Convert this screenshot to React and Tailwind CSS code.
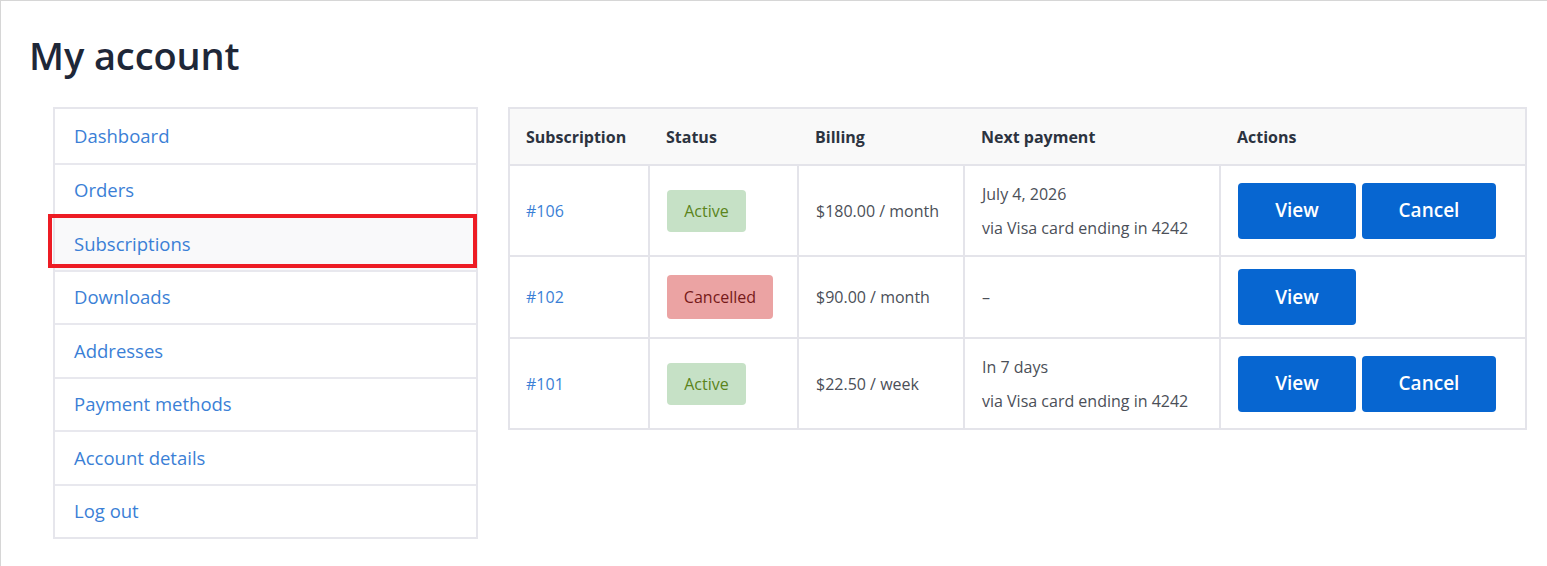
import React from "react";

const navItems = [
  "Dashboard",
  "Orders",
  "Subscriptions",
  "Downloads",
  "Addresses",
  "Payment methods",
  "Account details",
  "Log out",
];

function Badge({ status }) {
  if (status === "Active") {
    return (
      <span className="inline-flex items-center justify-center h-[42px] w-[79px] rounded-[4px] bg-[#c6e1c6] text-[#5b841b] text-[16px]">
        Active
      </span>
    );
  }
  return (
    <span className="inline-flex items-center justify-center h-[44px] w-[106px] rounded-[4px] bg-[#eba3a3] text-[#761919] text-[16px]">
      Cancelled
    </span>
  );
}

function Btn({ children, w }) {
  return (
    <button className={`h-[56px] ${w} rounded-[4px] bg-[#0766d1] text-white font-semibold text-[19px]`}>
      {children}
    </button>
  );
}

const rows = [
  {
    id: "#106",
    status: "Active",
    billing: "$180.00 / month",
    next: ["July 4, 2026", "via Visa card ending in 4242"],
    cancel: true,
    h: "h-[91px]",
  },
  {
    id: "#102",
    status: "Cancelled",
    billing: "$90.00 / month",
    next: ["–"],
    cancel: false,
    h: "h-[82px]",
  },
  {
    id: "#101",
    status: "Active",
    billing: "$22.50 / week",
    next: ["In 7 days", "via Visa card ending in 4242"],
    cancel: true,
    h: "h-[91px]",
  },
];

export default function App() {
  return (
    <div
      className="w-[1547px] h-[566px] bg-white border-t border-l border-[#d6d6d6] overflow-hidden"
      style={{ fontFamily: '"Open Sans", "Noto Sans", sans-serif' }}
    >
      <h1 className="pl-[28px] pt-[28px] text-[38px] leading-[52px] font-semibold text-[#1e2738] tracking-[-0.1px]">
        My account
      </h1>
      <div className="flex pl-[52px] pt-[26px] gap-[30px] items-start">
        <div className="relative">
          <nav className="w-[425px] border-2 border-[#e6e6ec]">
            {navItems.map((item, i) => (
              <div
                key={item}
                className={`h-[53.5px] flex items-center pl-[19px] text-[18.5px] text-[#3b7fd6] ${
                  i > 0 ? "border-t-2 border-[#e8e8ee]" : ""
                } ${item === "Subscriptions" ? "bg-[#f9f9fa]" : ""}`}
              >
                {item}
              </div>
            ))}
          </nav>
          <div className="absolute left-[-5px] top-[107px] w-[429px] h-[54px] border-4 border-[#ed1c24] pointer-events-none" />
        </div>
        <table className="border-collapse border-2 border-[#e4e4ea] text-[16px] text-[#4b4f58]">
          <colgroup>
            <col className="w-[140px]" />
            <col className="w-[149px]" />
            <col className="w-[166px]" />
            <col className="w-[256px]" />
            <col className="w-[306px]" />
          </colgroup>
          <thead>
            <tr className="h-[57px] bg-[#f9f9f9] text-[#2c3340] font-bold text-left">
              <th className="pl-[16px] font-bold">Subscription</th>
              <th className="pl-[17px] font-bold">Status</th>
              <th className="pl-[17px] font-bold">Billing</th>
              <th className="pl-[17px] font-bold">Next payment</th>
              <th className="pl-[17px] font-bold">Actions</th>
            </tr>
          </thead>
          <tbody>
            {rows.map((r) => (
              <tr key={r.id} className={`${r.h} border-t-2 border-[#e4e4ea]`}>
                <td className="pl-[16px] text-[#3b7fd6]">{r.id}</td>
                <td className="pl-[17px] border-l-2 border-[#e4e4ea]">
                  <Badge status={r.status} />
                </td>
                <td className="pl-[17px] border-l-2 border-[#e4e4ea]">{r.billing}</td>
                <td className="pl-[17px] border-l-2 border-[#e4e4ea] leading-[34px]">
                  {r.next.map((l) => (
                    <div key={l}>{l}</div>
                  ))}
                </td>
                <td className="pl-[17px] border-l-2 border-[#e4e4ea]">
                  <div className="flex gap-[6px]">
                    <Btn w="w-[118px]">View</Btn>
                    {r.cancel && <Btn w="w-[134px]">Cancel</Btn>}
                  </div>
                </td>
              </tr>
            ))}
          </tbody>
        </table>
      </div>
    </div>
  );
}
